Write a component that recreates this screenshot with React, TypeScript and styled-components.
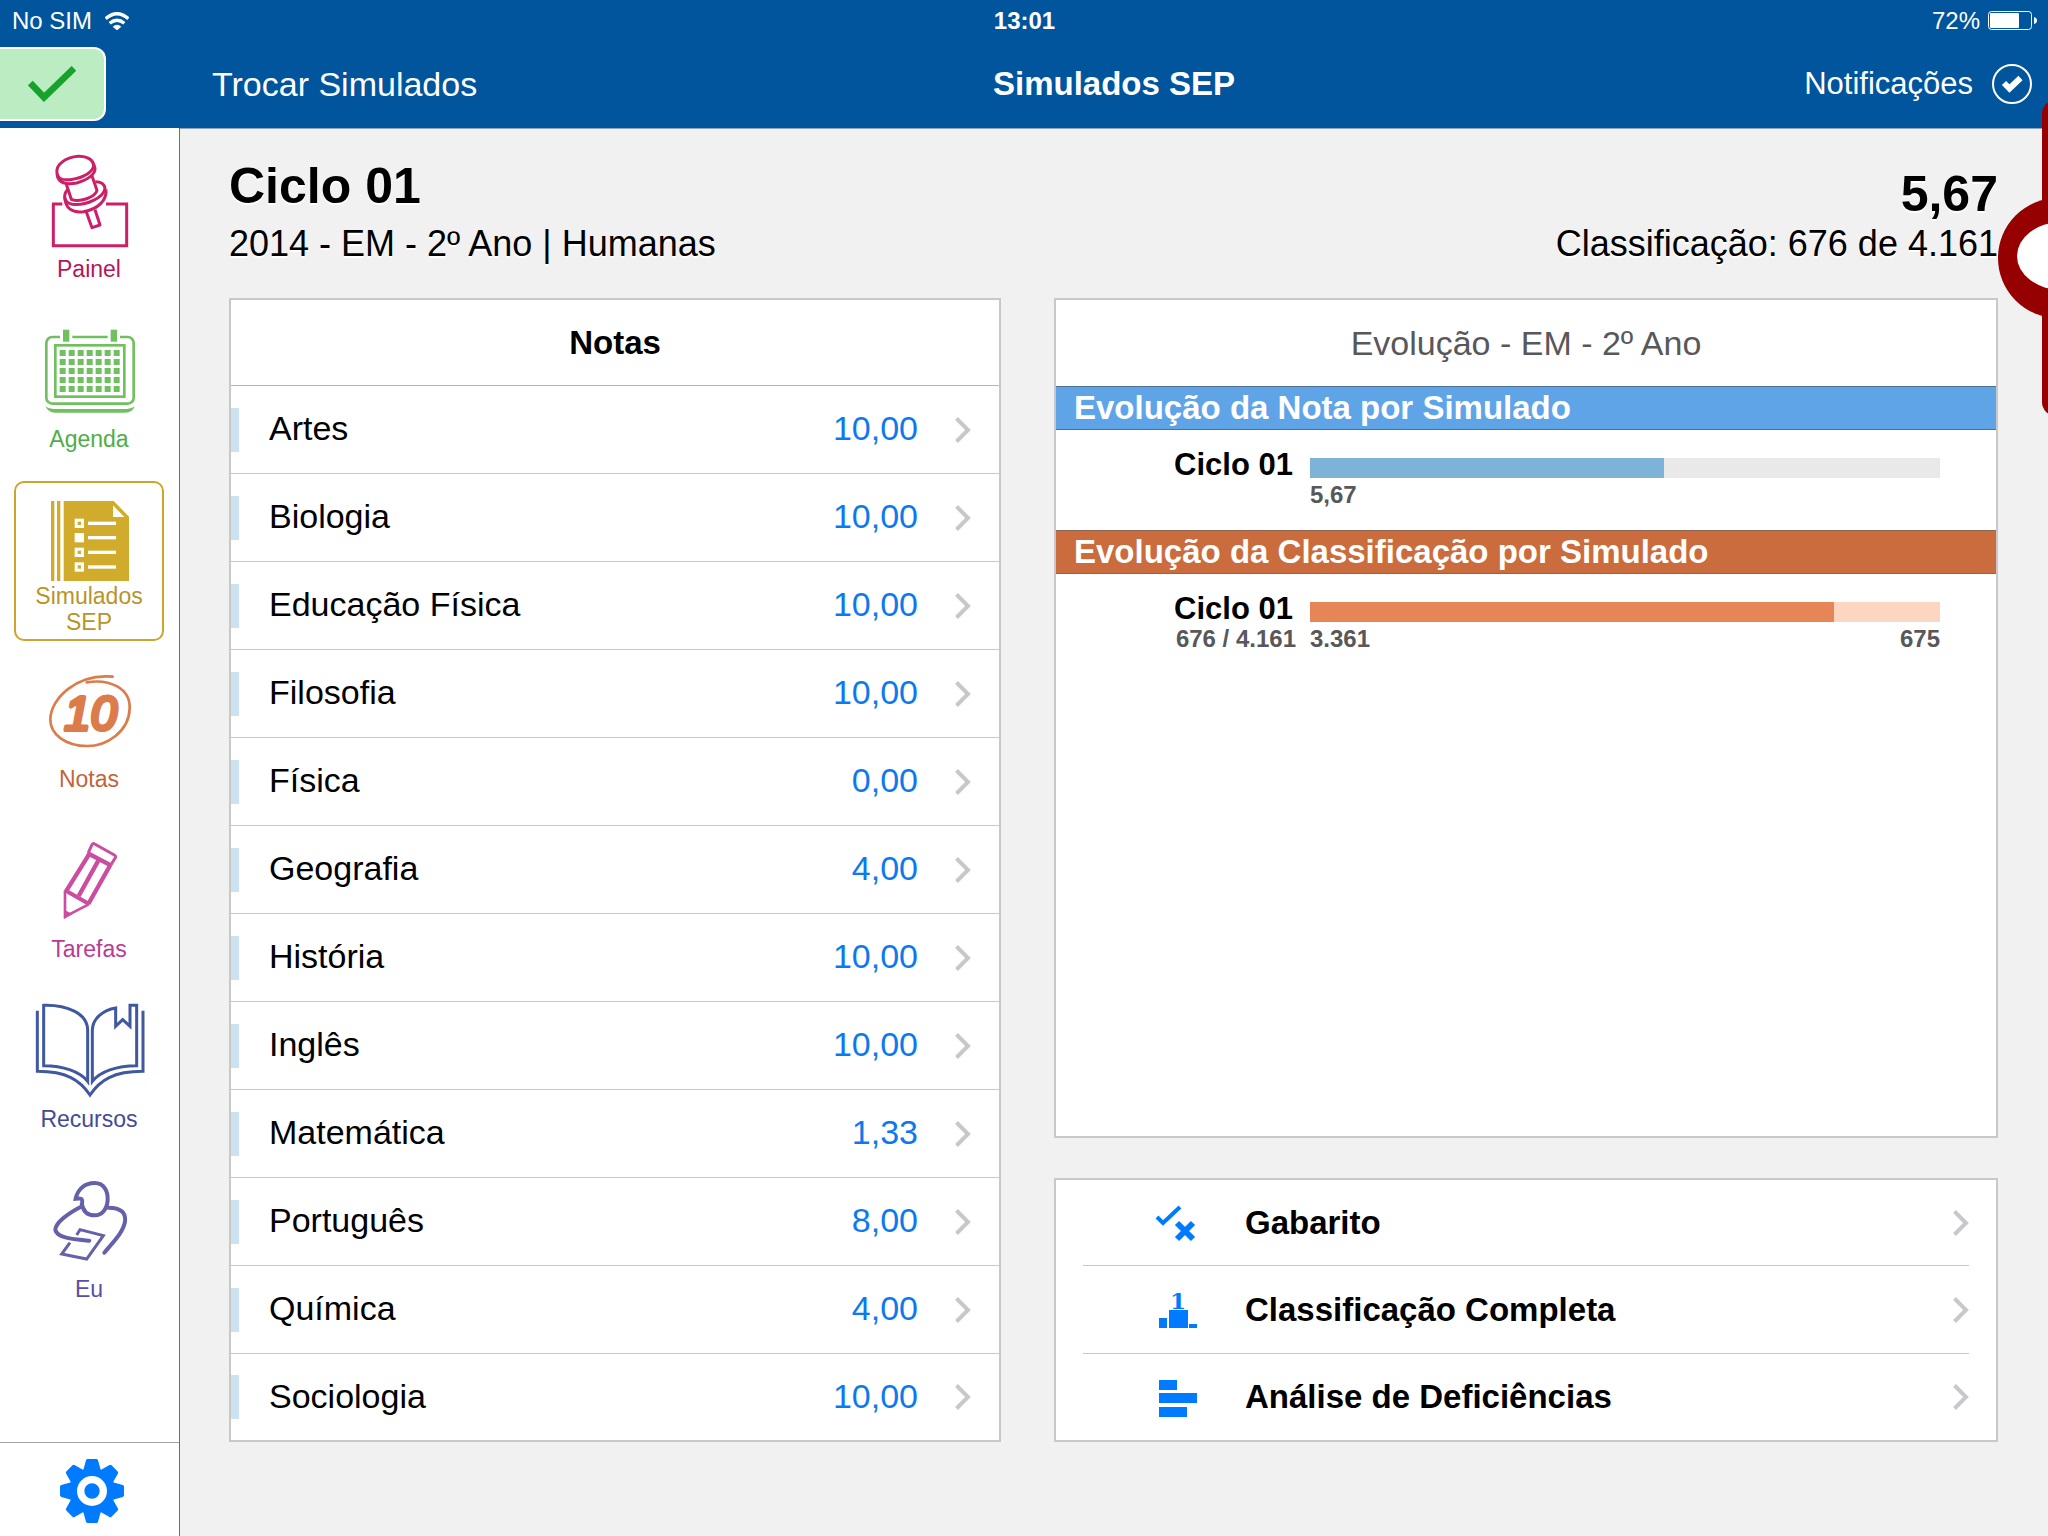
import React from 'react';
import styled, { createGlobalStyle } from 'styled-components';

const GlobalStyle = createGlobalStyle`
  *, *::before, *::after { box-sizing: border-box; }
  body {
    margin: 0;
    background: #f1f1f1;
    color: #000;
    font-family: "Liberation Sans", Arial, Helvetica, sans-serif;
    font-size: 34px;
  }
  button { font: inherit; color: inherit; background: none; border: 0; padding: 0; cursor: pointer; }
  a { color: inherit; text-decoration: none; }
  ul { list-style: none; margin: 0; padding: 0; }
  h1, h2, h3, p { margin: 0; font-weight: normal; }
  svg { display: block; flex: none; }
`;

const Page = styled.div`
  position: relative;
  display: flex;
  flex-direction: column;
  min-height: 100vh;
  overflow: hidden;
`;

/* ---------- top bar ---------- */

const TopBar = styled.header`
  background: #00559c;
  color: #fff;
`;

const StatusBar = styled.div`
  display: grid;
  grid-template-columns: 1fr auto 1fr;
  align-items: center;
  height: 40px;
  padding: 2px 11px 0 12px;
  font-size: 24px;
`;

const StatusGroup = styled.div<{ $end?: boolean }>`
  display: flex;
  align-items: center;
  gap: ${(p) => (p.$end ? 8 : 13)}px;
  justify-content: ${(p) => (p.$end ? 'flex-end' : 'flex-start')};
`;

const Clock = styled.span`
  font-weight: bold;
`;

const NavBar = styled.div`
  display: grid;
  grid-template-columns: 180px 1fr auto 1fr;
  align-items: center;
  height: 88px;
`;

const ConfirmButton = styled.button`
  display: flex;
  align-items: center;
  width: 106px;
  height: 74px;
  padding-left: 28px;
  border: 2px solid #fff;
  border-left: 0;
  border-radius: 0 12px 12px 0;
  background: #bbecc2;
`;

const SwitchButton = styled.button`
  justify-self: start;
  margin-left: 32px;
`;

const NavTitle = styled.h1`
  font-size: 33px;
  font-weight: bold;
`;

const NoticeButton = styled.button`
  display: flex;
  align-items: center;
  justify-self: end;
  gap: 19px;
  margin-right: 16px;
  font-size: 31px;
`;

/* ---------- sidebar ---------- */

const Body = styled.div`
  display: flex;
  flex: 1;
`;

const Sidebar = styled.nav`
  display: flex;
  flex-direction: column;
  flex: none;
  width: 180px;
  background: #fff;
  border-right: 1px solid #6f6f73;
`;

const SideList = styled.ul`
  display: flex;
  flex-direction: column;
  flex: 1;
  gap: 10px;
  padding: 13px 15px 0 14px;
`;

const SideLink = styled.a<{ $color: string; $active?: boolean }>`
  display: flex;
  flex-direction: column;
  align-items: center;
  height: 160px;
  padding-top: 16px;
  border: 2px solid ${(p) => (p.$active ? '#cda52c' : 'transparent')};
  border-radius: 10px;
  color: ${(p) => p.$color};
  font-size: 23px;
  line-height: 26px;
  text-align: center;
`;

const SideLabel = styled.span`
  display: flex;
  align-items: center;
  height: 52px;
  max-width: 120px;
`;

const SideIcon = styled.svg`
  width: 120px;
  height: 84px;
  overflow: visible;
`;

const Settings = styled.button`
  display: flex;
  align-items: center;
  justify-content: center;
  height: 94px;
  padding: 2px 0 0 4px;
  border-top: 1px solid #a5a5a8;
`;

/* ---------- content ---------- */

const Content = styled.main`
  flex: 1;
  min-width: 0;
  padding: 27px 50px 94px 49px;
  border-top: 1px solid #8fa6ba;
`;

const Summary = styled.section`
  display: flex;
  align-items: flex-end;
  justify-content: space-between;
  margin-bottom: 34px;
  text-shadow: 0 2px 0 #fff;
`;

const SummarySide = styled.div<{ $end?: boolean }>`
  display: flex;
  flex-direction: column;
  gap: ${(p) => (p.$end ? 0 : 8)}px;
  text-align: ${(p) => (p.$end ? 'right' : 'left')};
`;

const Headline = styled.h2`
  font-size: 50px;
  line-height: 60px;
  font-weight: bold;
`;

const Subline = styled.p`
  font-size: 36px;
  line-height: 40px;
`;

const Columns = styled.div`
  display: grid;
  grid-template-columns: 772fr 944fr;
  gap: 53px;
`;

const Column = styled.div`
  display: flex;
  flex-direction: column;
  gap: 40px;
`;

const Panel = styled.section<{ $grow?: boolean }>`
  flex: ${(p) => (p.$grow ? 1 : 'none')};
  background: #fff;
  border: 2px solid #c8c8ca;
`;

const PanelTitle = styled.h3<{ $muted?: boolean }>`
  display: flex;
  align-items: center;
  justify-content: center;
  height: 86px;
  font-size: ${(p) => (p.$muted ? 34 : 33)}px;
  font-weight: ${(p) => (p.$muted ? 'normal' : 'bold')};
  color: ${(p) => (p.$muted ? '#58585a' : '#000')};
  border-bottom: ${(p) => (p.$muted ? '0' : '1px solid #b4b4b6')};
`;

const RowItem = styled.li`
  display: flex;
  height: 88px;
  border-bottom: 1px solid #c8c8ca;
  &:last-child { height: 86px; border-bottom: 0; }
`;

const GradeButton = styled.button`
  display: flex;
  align-items: center;
  flex: 1;
  padding-right: 28px;
  text-align: left;
  &::before {
    content: "";
    width: 8px;
    height: 44px;
    margin-right: 30px;
    background: #cce2f0;
  }
`;

const Subject = styled.span`
  flex: 1;
  padding-bottom: 2px;
`;

const Grade = styled.span`
  margin-right: 36px;
  padding-bottom: 2px;
  color: #0d79ee;
`;

const SectionBar = styled.h3<{ $bg: string; $line: string }>`
  display: flex;
  align-items: center;
  height: 44px;
  padding-left: 18px;
  background: ${(p) => p.$bg};
  border: solid ${(p) => p.$line};
  border-width: 1px 0;
  color: #fff;
  font-size: 33px;
  font-weight: bold;
`;

const Chart = styled.div`
  display: grid;
  grid-template-columns: 240px 1fr;
  grid-template-rows: 36px 26px;
  column-gap: 14px;
  height: 100px;
  padding: 16px 56px 0 0;
  color: #58585a;
  font-size: 24px;
  line-height: 26px;
  font-weight: bold;
`;

const ChartLabel = styled.span`
  padding-right: 3px;
  color: #000;
  font-size: 31px;
  line-height: 38px;
  text-align: right;
`;

const Track = styled.div<{ $bg: string }>`
  height: 20px;
  margin-top: 12px;
  background: ${(p) => p.$bg};
`;

const Fill = styled.div<{ $bg: string }>`
  height: 100%;
  background: ${(p) => p.$bg};
`;

const ChartNote = styled.span`
  text-align: right;
`;

const ChartScale = styled.div`
  display: flex;
  justify-content: space-between;
`;

const ActionList = styled.ul`
  padding: 0 27px;
`;

const ActionItem = styled(RowItem)`
  &:first-child { height: 86px; }
`;

const ActionButton = styled.button`
  display: flex;
  align-items: center;
  flex: 1;
  gap: 46px;
  padding-left: 72px;
  font-size: 33px;
  font-weight: bold;
  text-align: left;
`;

const ActionText = styled.span`
  flex: 1;
`;

/* Drawer handle that hangs over the right edge of the window. */
const DrawerHandle = styled.button`
  position: absolute;
  top: 100px;
  right: 0;
`;

/* ---------- icons ---------- */

const Chevron = () => (
  <svg width="17" height="28" viewBox="0 0 17 28" fill="none" stroke="#c7c7cc" strokeWidth="4">
    <path d="M2.500 2.500 L14 14 L2.500 25.500" />
  </svg>
);

const PinIcon = () => (
  <SideIcon viewBox="87 477 360 252" fill="none" stroke="#cb2068" strokeWidth="9">
    <path d="M187 612 H160 V737 H380 V612 H318" />
    <path d="M171 520 C166 495 195 472 235 469 C262 468 279 480 281 494 C282 515 250 534 210 539 C185 541 174 536 171 520 Z" />
    <path d="M171 522 C174 550 200 555 230 549 C262 540 286 524 285 505 L281 492" />
    <path d="M199 553 L214 598 C238 608 287 592 291 571 L276 528" />
    <path d="M204 568 C187 585 192 608 217 613 C258 618 312 592 315 565 C313 551 300 545 286 545" />
    <path d="M194 592 C197 625 215 639 250 635 C295 628 321 600 318 568" />
    <path d="M259 636 L276 683 L300 675 L285 629" strokeLinejoin="round" />
  </SideIcon>
);

const AgendaIcon = () => (
  <SideIcon viewBox="87 87 360 252" fill="#70c060">
    <rect x="139" y="111" width="262" height="200" rx="18" fill="none" stroke="#70c060" strokeWidth="8" />
    <rect x="180" y="100" width="37" height="24" fill="#fff" />
    <rect x="323" y="100" width="37" height="24" fill="#fff" />
    <rect x="189" y="89" width="19" height="36" />
    <rect x="332" y="89" width="19" height="36" />
    <rect x="166" y="136" width="207" height="154" fill="none" stroke="#70c060" strokeWidth="8" />
    {[0, 1, 2, 3, 4].map((r) =>
      [0, 1, 2, 3, 4, 5, 6].map((c) => (
        <rect key={`${r}-${c}`} x={179 + c * 27} y={150 + r * 27} width="18" height="18" />
      ))
    )}
    <path d="M136 319 Q145 327 160 327 H380 Q395 327 404 319 Q398 338 375 338 H165 Q145 338 136 319 Z" />
  </SideIcon>
);

const SimuladosIcon = () => (
  <SideIcon viewBox="87 597 360 252" fill="#d1ab2b">
    <rect x="153" y="603" width="10" height="240" />
    <rect x="171" y="603" width="10" height="240" />
    <path d="M191 603 H341 L387 650 V843 H191 Z" />
    <path d="M339 616 V651 H373 Z" fill="#fff" />
    {[656, 699, 743, 787].map((y, i) => (
      <g key={y}>
        <rect x="224" y={y} width="28" height="28" fill="#fff" />
        <rect x="264" y={y + 9} width="84" height="10" fill="#fff" />
        {i !== 1 && <rect x="233" y={y + 9} width="10" height="10" />}
      </g>
    ))}
  </SideIcon>
);

const NotasIcon = () => (
  <SideIcon viewBox="87 57 360 252" fill="none" stroke="#dc7c4b">
    <path
      d="M260 97 C330 86 391 115 389 175 C387 245 320 288 262 288 C195 288 150 252 151 207 C153 145 230 70 338 80"
      strokeWidth="8"
      strokeLinecap="round"
    />
    <text
      x="272"
      y="239"
      textAnchor="middle"
      fontFamily="Liberation Sans, Arial, sans-serif"
      fontSize="142"
      fontStyle="italic"
      fill="#dc7c4b"
      strokeWidth="12"
      strokeLinejoin="round"
    >
      10
    </text>
  </SideIcon>
);

const TarefasIcon = () => (
  <SideIcon viewBox="87 567 360 252" fill="none" stroke="#cc4d9f" strokeWidth="9">
    <path d="M265 608 L276 584 Q279 579 284 582 L343 615 Q349 618 346 623 L332 646" />
    <path d="M262 609 L334 647" strokeWidth="13" />
    <path d="M269 610 L198 724 M331 645 L265 762 M297 628 L236 738" strokeWidth="13" />
    <path d="M194 720 L267 762" strokeWidth="12" />
    <path d="M195 722 V800 L266 763" strokeWidth="8" />
    <path d="M192 807 V779 L218 792 Z" fill="#cc4d9f" stroke="none" />
  </SideIcon>
);

const RecursosIcon = () => (
  <SideIcon viewBox="87 87 360 252" fill="none" stroke="#3f58a0" strokeWidth="9">
    <path d="M131 76 C200 74 263 100 263 150 V304 C240 275 190 257 131 257 Z" />
    <path d="M277 304 V150 C278 115 310 90 347 84 V139 L368 119 L390 139 V76 H410 V257 C350 257 300 275 277 304 Z" />
    <path d="M112 92 V274 C200 274 240 300 270 345 C300 300 340 274 429 274 V92" />
  </SideIcon>
);

const EuIcon = () => (
  <SideIcon viewBox="87 597 360 252" fill="none" stroke="#6561a9" strokeWidth="12">
    <path d="M246 672 C249 655 243 654 227 656 C233 627 255 609 284 609 C313 609 324 635 323 660 C321 689 305 706 285 706 C262 706 248 692 245 668" />
    <path d="M243 680 C200 702 166 730 166 750 C171 775 225 778 268 782" strokeLinecap="round" />
    <path d="M325 683 C365 683 378 700 375 725 C370 755 345 780 313 818" strokeLinecap="round" />
    <path d="M230 765 L240 749 L310 767 L260 837 L185 822 L210 788" strokeWidth="9" />
  </SideIcon>
);

const GearIcon = () => (
  <svg width="64" height="64" viewBox="-96 -96 192 192" fill="#007aff">
    <circle r="69" />
    {[0, 45, 90, 135, 180, 225, 270, 315].map((a) => (
      <path key={a} transform={`rotate(${a})`} d="M-13 -96 H13 Q17 -96 18 -92 L27 -60 H-27 L-18 -92 Q-17 -96 -13 -96 Z" />
    ))}
    <circle r="45" fill="#fff" />
    <circle r="23" />
  </svg>
);

const WifiIcon = () => (
  <svg width="24" height="18" viewBox="320 32 72 54" fill="none" stroke="#fff" strokeWidth="10">
    <path d="M322 52 Q356 22 390 52" />
    <path d="M334 66 Q356 48 378 66" />
    <path d="M343 76 Q356 65 369 76 L356 87 Z" fill="#fff" stroke="none" />
  </svg>
);

const BatteryIcon = () => (
  <svg width="49" height="20" viewBox="0 0 49 20" fill="#fff">
    <rect x="0.5" y="0.5" width="43" height="18" rx="3" fill="none" stroke="#fff" />
    <rect x="2" y="2" width="29" height="15" rx="1" />
    <path d="M46 6 Q49 7 49 9.500 Q49 12 46 13 Z" />
  </svg>
);

const BadgeCheck = () => (
  <svg width="48" height="36" viewBox="84 195 144 108" fill="none" stroke="#16a32c" strokeWidth="20">
    <path d="M91 246 L132 289 L222 202" />
  </svg>
);

const CircleCheck = () => (
  <svg width="40" height="40" viewBox="0 0 40 40" fill="none" stroke="#fff">
    <circle cx="20" cy="20" r="19" strokeWidth="2" />
    <path d="M12 19 L17.500 24.500 L28.500 14" strokeWidth="6" />
  </svg>
);

const HandleIcon = () => (
  <svg width="50" height="320" viewBox="0 0 50 320">
    <rect x="44" y="0" width="60" height="316" rx="14" fill="#960000" />
    <circle cx="60" cy="158" r="60" fill="#960000" />
    <ellipse cx="64" cy="156" rx="45" ry="34" fill="#fff" />
  </svg>
);

const GabaritoIcon = () => (
  <svg width="44" height="44" viewBox="0 0 44 44" fill="none" stroke="#007aff">
    <path d="M2 16 L8 22 L25 6" strokeWidth="4" />
    <path d="M22 22 L38 38 M38 22 L22 38" strokeWidth="6" />
  </svg>
);

const PodiumIcon = () => (
  <svg width="44" height="44" viewBox="0 0 44 44" fill="#007aff">
    <text x="23" y="21" textAnchor="middle" fontFamily="DejaVu Serif, Liberation Serif, serif" fontSize="23" fontWeight="bold">
      1
    </text>
    <rect x="4" y="30" width="8" height="10" />
    <rect x="14" y="22" width="19" height="18" />
    <rect x="34" y="36" width="8" height="4" />
  </svg>
);

const BarsIcon = () => (
  <svg width="44" height="44" viewBox="0 0 44 44" fill="#007aff">
    <rect x="4" y="5" width="18" height="10" />
    <rect x="4" y="18" width="38" height="10" />
    <rect x="4" y="32" width="28" height="10" />
  </svg>
);

/* ---------- data ---------- */

const menu = [
  { label: 'Painel', color: '#b41858', Icon: PinIcon },
  { label: 'Agenda', color: '#4fae45', Icon: AgendaIcon },
  { label: 'Simulados SEP', color: '#b8942a', Icon: SimuladosIcon, active: true },
  { label: 'Notas', color: '#c0653a', Icon: NotasIcon },
  { label: 'Tarefas', color: '#bb3a92', Icon: TarefasIcon },
  { label: 'Recursos', color: '#444a98', Icon: RecursosIcon },
  { label: 'Eu', color: '#5a4ea6', Icon: EuIcon },
];

const grades = [
  ['Artes', '10,00'],
  ['Biologia', '10,00'],
  ['Educação Física', '10,00'],
  ['Filosofia', '10,00'],
  ['Física', '0,00'],
  ['Geografia', '4,00'],
  ['História', '10,00'],
  ['Inglês', '10,00'],
  ['Matemática', '1,33'],
  ['Português', '8,00'],
  ['Química', '4,00'],
  ['Sociologia', '10,00'],
];

const charts = [
  {
    title: 'Evolução da Nota por Simulado',
    bg: '#60a4e8', line: '#4c6f92', fill: '#7db3d9', track: '#e9e9e9',
    percent: 56.2, note: '', low: '5,67', high: '',
  },
  {
    title: 'Evolução da Classificação por Simulado',
    bg: '#ca6c3e', line: '#8c6650', fill: '#e68656', track: '#fdd6c1',
    percent: 83.2, note: '676 / 4.161', low: '3.361', high: '675',
  },
];

const actions = [
  { label: 'Gabarito', Icon: GabaritoIcon },
  { label: 'Classificação Completa', Icon: PodiumIcon },
  { label: 'Análise de Deficiências', Icon: BarsIcon },
];

export default function App() {
  return (
    <Page>
      <GlobalStyle />
      <TopBar>
        <StatusBar>
          <StatusGroup>
            <span>No SIM</span>
            <WifiIcon />
          </StatusGroup>
          <Clock>13:01</Clock>
          <StatusGroup $end>
            <span>72%</span>
            <BatteryIcon />
          </StatusGroup>
        </StatusBar>
        <NavBar>
          <ConfirmButton type="button" aria-label="Confirmar">
            <BadgeCheck />
          </ConfirmButton>
          <SwitchButton type="button">Trocar Simulados</SwitchButton>
          <NavTitle>Simulados SEP</NavTitle>
          <NoticeButton type="button">
            Notificações
            <CircleCheck />
          </NoticeButton>
        </NavBar>
      </TopBar>

      <Body>
        <Sidebar>
          <SideList>
            {menu.map(({ label, color, Icon, active }) => (
              <li key={label}>
                <SideLink href="#" $color={color} $active={active}>
                  <Icon />
                  <SideLabel>{label}</SideLabel>
                </SideLink>
              </li>
            ))}
          </SideList>
          <Settings type="button" aria-label="Configurações">
            <GearIcon />
          </Settings>
        </Sidebar>

        <Content>
          <Summary>
            <SummarySide>
              <Headline>Ciclo 01</Headline>
              <Subline>2014 - EM - 2º Ano | Humanas</Subline>
            </SummarySide>
            <SummarySide $end>
              <Headline>5,67</Headline>
              <Subline>Classificação: 676 de 4.161</Subline>
            </SummarySide>
          </Summary>

          <Columns>
            <Panel>
              <PanelTitle>Notas</PanelTitle>
              <ul>
                {grades.map(([subject, grade]) => (
                  <RowItem key={subject}>
                    <GradeButton type="button">
                      <Subject>{subject}</Subject>
                      <Grade>{grade}</Grade>
                      <Chevron />
                    </GradeButton>
                  </RowItem>
                ))}
              </ul>
            </Panel>

            <Column>
              <Panel $grow>
                <PanelTitle $muted>Evolução - EM - 2º Ano</PanelTitle>
                {charts.map((c) => (
                  <React.Fragment key={c.title}>
                    <SectionBar $bg={c.bg} $line={c.line}>{c.title}</SectionBar>
                    <Chart>
                      <ChartLabel>Ciclo 01</ChartLabel>
                      <Track $bg={c.track}>
                        <Fill $bg={c.fill} style={{ width: `${c.percent}%` }} />
                      </Track>
                      <ChartNote>{c.note}</ChartNote>
                      <ChartScale>
                        <span>{c.low}</span>
                        <span>{c.high}</span>
                      </ChartScale>
                    </Chart>
                  </React.Fragment>
                ))}
              </Panel>
              <Panel>
                <ActionList>
                  {actions.map(({ label, Icon }) => (
                    <ActionItem key={label}>
                      <ActionButton type="button">
                        <Icon />
                        <ActionText>{label}</ActionText>
                        <Chevron />
                      </ActionButton>
                    </ActionItem>
                  ))}
                </ActionList>
              </Panel>
            </Column>
          </Columns>
        </Content>
      </Body>

      <DrawerHandle type="button" aria-label="Abrir painel lateral">
        <HandleIcon />
      </DrawerHandle>
    </Page>
  );
}
